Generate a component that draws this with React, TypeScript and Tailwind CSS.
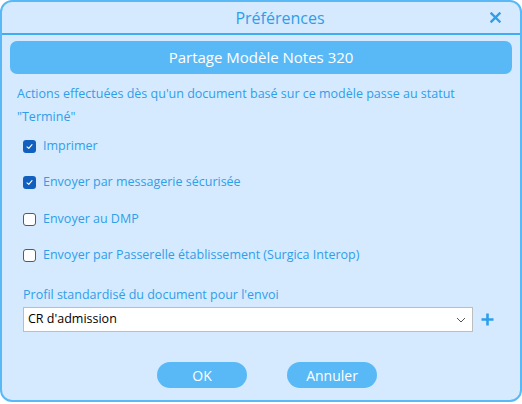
import { useState } from 'react';

const OPTIONS = [
  { label: 'Imprimer', checked: true },
  { label: 'Envoyer par messagerie sécurisée', checked: true },
  { label: 'Envoyer au DMP', checked: false },
  { label: 'Envoyer par Passerelle établissement (Surgica Interop)', checked: false },
];

function Checkbox({ checked }: { checked: boolean }) {
  if (checked) {
    return (
      <span className="w-[13px] h-[13px] rounded-[3px] bg-[#1160bf] flex items-center justify-center shrink-0">
        <svg width="9" height="9" viewBox="0 0 9 9" fill="none">
          <path d="M2 4.8 L3.8 6.4 L7 2.6" stroke="white" strokeWidth="1.1" strokeLinecap="round" strokeLinejoin="round" />
        </svg>
      </span>
    );
  }
  return <span className="w-[13px] h-[13px] rounded-[3px] border border-[#5a5a5a] bg-white shrink-0" />;
}

export default function App() {
  const [opts] = useState(OPTIONS);

  return (
    <div className="w-[522px] h-[404px] bg-white font-['Open_Sans',sans-serif]">
      <div className="w-[522px] h-[402px] bg-[#d5eaff] border-2 border-[#59b9f7] rounded-[12px] flex flex-col overflow-hidden">
        {/* Title bar */}
        <div className="h-[33px] border-b-2 border-[#40adf3] flex items-center shrink-0">
          <h1 className="flex-1 text-center pl-[88px] text-[16px] text-[#2f9ee9]">Préférences</h1>
          <button className="w-[50px] h-full flex items-center justify-center">
            <svg width="11" height="11" viewBox="0 0 11 11">
              <path d="M1.5 1.5 L9.5 9.5 M9.5 1.5 L1.5 9.5" stroke="#2f9ee9" strokeWidth="2.4" strokeLinecap="square" />
            </svg>
          </button>
        </div>

        <div className="px-[8px] pt-[6px] flex flex-col">
          {/* Header */}
          <div className="h-[33px] rounded-[7px] bg-[#59b9f7] flex items-center justify-center text-white text-[15px]">
            Partage Modèle Notes 320
          </div>

          <div className="px-[7px]">
            <p className="mt-[8px] text-[12.5px] leading-[23px] text-[#2f9ee9]">
              Actions effectuées dès qu'un document basé sur ce modèle passe au statut
              <br />
              "Terminé"
            </p>

            <div className="pl-[6px] flex flex-col">
              {opts.map((o) => (
                <label key={o.label} className="h-[36.5px] flex items-center gap-[7px] text-[12.5px] text-[#2f9ee9]">
                  <Checkbox checked={o.checked} />
                  <span>{o.label}</span>
                </label>
              ))}
            </div>

            <div className="pl-[6px]">
              <p className="mt-[13px] text-[12.5px] leading-[16px] text-[#2f9ee9]">Profil standardisé du document pour l'envoi</p>

              <div className="mt-[4px] flex items-center gap-[8px]">
                <div className="w-[450px] h-[25px] bg-white border border-[#bdbdbd] flex items-center justify-between pl-[4px] pr-[6px]">
                  <span className="text-[12.5px] text-black">CR d'admission</span>
                  <svg width="10" height="6" viewBox="0 0 10 6">
                    <path d="M1 1 L5 5 L9 1" stroke="#555" strokeWidth="1" fill="none" />
                  </svg>
                </div>
                <svg width="13" height="13" viewBox="0 0 13 13">
                  <path d="M6.5 0.5 V12.5 M0.5 6.5 H12.5" stroke="#2f9ee9" strokeWidth="2.6" />
                </svg>
              </div>
            </div>

            <div className="mt-[30px] flex justify-center gap-[40px] pl-[12px]">
              <button className="w-[90px] h-[26px] rounded-full bg-[#59b9f7] text-white text-[14px]">OK</button>
              <button className="w-[90px] h-[26px] rounded-full bg-[#59b9f7] text-white text-[14px]">Annuler</button>
            </div>
          </div>
        </div>
      </div>
    </div>
  );
}
